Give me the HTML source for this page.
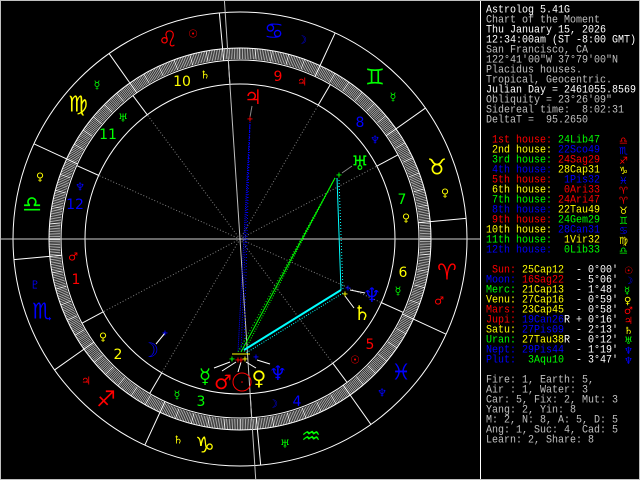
<!DOCTYPE html>
<html><head><meta charset="utf-8">
<style>
html,body{margin:0;padding:0;background:#000;}
#wrap{position:relative;width:640px;height:480px;overflow:hidden;background:#000;}
#frame{position:absolute;left:0;top:0;width:638px;height:478px;border:1px solid #c0c0c0;}
#vsep{position:absolute;left:480px;top:0;width:1px;height:480px;background:#ffffff;}
#panel{position:absolute;left:486px;top:6px;width:160px;height:480px;font-family:"Liberation Mono","DejaVu Sans Mono",monospace;font-size:10px;}
.ln{position:absolute;left:0;height:10px;line-height:10px;white-space:pre;transform:scaleY(1.12);transform-origin:0 0;}
.g{position:absolute;left:0;font-family:"DejaVu Sans",sans-serif;font-size:10px;line-height:10px;}
.w{color:#fff}.s{color:#c0c0c0}.r{color:#ff0000}.y{color:#ffff00}.gr{color:#00ff00}.b{color:#0000ff}
svg text{font-family:"DejaVu Sans",sans-serif;text-anchor:middle;dominant-baseline:central;}
</style></head><body>
<div id="wrap">
<svg id="chart" width="480" height="480" style="position:absolute;left:0;top:0">
<g id="geo"></g>
<g font-size="22">
<text x="168" y="40" fill="#f00">♌&#xFE0E;</text>
<text x="78" y="105" fill="#ff0">♍&#xFE0E;</text>
<text x="32" y="205" fill="#0f0">♎&#xFE0E;</text>
<text x="42" y="312" fill="#00f">♏&#xFE0E;</text>
<text x="106" y="400" fill="#f00">♐&#xFE0E;</text>
<text x="205" y="446" fill="#ff0">♑&#xFE0E;</text>
<text x="311" y="437" fill="#0f0">♒&#xFE0E;</text>
<text x="401" y="373" fill="#00f">♓&#xFE0E;</text>
<text x="447" y="273" fill="#f00">♈&#xFE0E;</text>
<text x="437" y="168" fill="#ff0">♉&#xFE0E;</text>
<text x="375" y="78" fill="#0f0">♊&#xFE0E;</text>
<text x="274" y="32" fill="#00f">♋&#xFE0E;</text>
</g>
<g font-size="11">
<text x="193" y="34" fill="#f00">☉</text>
<text x="302" y="40" fill="#00f">☽</text>
<text x="393" y="97" fill="#0f0">☿</text>
<text x="445" y="193" fill="#ff0">♀</text>
<text x="439" y="301" fill="#f00">♂</text>
<text x="382" y="393" fill="#00f">♆</text>
<text x="285" y="444" fill="#0f0">♅</text>
<text x="178" y="440" fill="#ff0">♄</text>
<text x="86" y="381" fill="#f00">♃</text>
<text x="35" y="285" fill="#00f">♇</text>
<text x="40" y="177" fill="#ff0">♀</text>
<text x="97" y="85" fill="#0f0">☿</text>
</g>
<g font-size="14" style="font-family:'DejaVu Sans Mono',monospace">
<text x="182" y="82" fill="#ff0">10</text>
<text x="108" y="135" fill="#0f0">11</text>
<text x="75" y="205" fill="#00f">12</text>
<text x="76" y="280" fill="#f00">1</text>
<text x="118" y="355" fill="#ff0">2</text>
<text x="201" y="402" fill="#0f0">3</text>
<text x="297" y="402" fill="#00f">4</text>
<text x="370" y="345" fill="#f00">5</text>
<text x="403" y="273" fill="#ff0">6</text>
<text x="402" y="200" fill="#0f0">7</text>
<text x="360" y="123" fill="#00f">8</text>
<text x="278" y="77" fill="#f00">9</text>
</g>
<g font-size="11">
<text x="205" y="75" fill="#ff0">♄</text>
<text x="123" y="118" fill="#0f0">♅</text>
<text x="80" y="187" fill="#00f">♆</text>
<text x="73" y="257" fill="#f00">♂</text>
<text x="103" y="337" fill="#ff0">♀</text>
<text x="177" y="395" fill="#0f0">☿</text>
<text x="273" y="404" fill="#00f">☽</text>
<text x="355" y="360" fill="#f00">☉</text>
<text x="398" y="291" fill="#0f0">☿</text>
<text x="406" y="218" fill="#ff0">♀</text>
<text x="375" y="140" fill="#00f">♆</text>
<text x="302" y="82" fill="#f00">♃</text>
</g>
<g fill="none">
<line x1="250" y1="122" x2="238" y2="352" stroke="#00f" stroke-dasharray="1 1"/>
<line x1="250" y1="122" x2="241" y2="352" stroke="#00f" stroke-dasharray="1 1.5"/>
<line x1="250" y1="122" x2="244" y2="350" stroke="#00f" stroke-dasharray="1 2"/>
<line x1="335" y1="178" x2="241" y2="352" stroke="#0f0"/>
<line x1="335" y1="178" x2="244" y2="352" stroke="#0f0" stroke-dasharray="1 1.5"/>
<line x1="335" y1="178" x2="238" y2="352" stroke="#0f0" stroke-dasharray="1 2"/>
<line x1="337" y1="178" x2="341" y2="290" stroke="#0ff"/>
<line x1="339" y1="180" x2="343" y2="290" stroke="#0ff" stroke-dasharray="1 2"/>
<line x1="341" y1="290" x2="244" y2="350" stroke="#0ff" stroke-width="2"/>
<line x1="343" y1="293" x2="246" y2="353" stroke="#0ff" stroke-dasharray="1 1.5"/>
<line x1="232" y1="354" x2="250" y2="354" stroke="#ff0"/>
<line x1="250" y1="117" x2="252" y2="106" stroke="#888"/>
<line x1="342" y1="173" x2="352" y2="166" stroke="#888"/>
<line x1="165" y1="333" x2="156" y2="344" stroke="#fff"/>
<line x1="350" y1="290" x2="365" y2="293" stroke="#fff"/>
<line x1="345" y1="296" x2="354" y2="308" stroke="#fff"/>
<line x1="236" y1="362" x2="222" y2="371" stroke="#fff"/>
<line x1="241" y1="362" x2="238" y2="372" stroke="#fff"/>
<line x1="230" y1="362" x2="214" y2="368" stroke="#fff"/>
<line x1="246" y1="362" x2="256" y2="368" stroke="#fff"/>
<line x1="257" y1="360" x2="270" y2="364" stroke="#fff"/>
</g>
<g font-size="8" font-weight="bold">
<text x="250" y="119" fill="#f00">+</text>
<text x="339" y="175" fill="#0f0">+</text>
<text x="348" y="288" fill="#00f">+</text>
<text x="345" y="294" fill="#ff0">+</text>
<text x="165" y="333" fill="#00f">+</text>
<text x="232" y="359" fill="#0f0">+</text>
<text x="238" y="360" fill="#f00">+</text>
<text x="241" y="360" fill="#f00">+</text>
<text x="245" y="359" fill="#ff0">+</text>
<text x="256" y="357" fill="#00f">+</text>
</g>
<g font-size="20">
<text x="253" y="97" fill="#f00">♃</text>
<text x="360" y="163" fill="#0f0">♅</text>
<text x="372" y="295" fill="#00f">♆</text>
<text x="362" y="313" fill="#ff0">♄</text>
<text x="150" y="350" fill="#00f">☽</text>
<text x="205" y="376" fill="#0f0">☿</text>
<text x="223" y="382" fill="#f00">♂</text>
<text x="259" y="378" fill="#ff0">♀</text>
<text x="278" y="373" fill="#00f">♆</text>
</g>
<circle cx="242" cy="382" r="9" fill="none" stroke="#f00"/>
<circle cx="242" cy="382" r="0.8" fill="#f00"/>
</svg>
<div id="vsep"></div>
<div id="frame"></div>
<div id="panel">
<div class="ln w" style="top:0px">Astrolog 5.41G</div>
<div class="ln s" style="top:10px">Chart of the Moment</div>
<div class="ln w" style="top:20px">Thu January 15, 2026</div>
<div class="ln w" style="top:30px">12:34:00am (ST -8:00 GMT)</div>
<div class="ln s" style="top:40px">San Francisco, CA</div>
<div class="ln s" style="top:50px">122°41'00"W 37°79'00"N</div>
<div class="ln s" style="top:60px">Placidus houses.</div>
<div class="ln s" style="top:70px">Tropical, Geocentric.</div>
<div class="ln w" style="top:80px">Julian Day = 2461055.8569</div>
<div class="ln s" style="top:90px">Obliquity = 23°26'09"</div>
<div class="ln s" style="top:100px">Sidereal time:  8:02:31</div>
<div class="ln s" style="top:110px">DeltaT =  95.2650</div>

<div class="ln" style="top:130px"><span class="r"> 1st house:</span> <span class="gr">24Lib47</span></div>
<div class="ln" style="top:140px"><span class="y"> 2nd house:</span> <span class="b">22Sco49</span></div>
<div class="ln" style="top:150px"><span class="gr"> 3rd house:</span> <span class="r">24Sag29</span></div>
<div class="ln" style="top:160px"><span class="b"> 4th house:</span> <span class="y">28Cap31</span></div>
<div class="ln" style="top:170px"><span class="r"> 5th house:</span> <span class="b"> 1Pis32</span></div>
<div class="ln" style="top:180px"><span class="y"> 6th house:</span> <span class="r"> 0Ari33</span></div>
<div class="ln" style="top:190px"><span class="gr"> 7th house:</span> <span class="r">24Ari47</span></div>
<div class="ln" style="top:200px"><span class="b"> 8th house:</span> <span class="y">22Tau49</span></div>
<div class="ln" style="top:210px"><span class="r"> 9th house:</span> <span class="gr">24Gem29</span></div>
<div class="ln" style="top:220px"><span class="y">10th house:</span> <span class="b">28Can31</span></div>
<div class="ln" style="top:230px"><span class="gr">11th house:</span> <span class="y"> 1Vir32</span></div>
<div class="ln" style="top:240px"><span class="b">12th house:</span> <span class="gr"> 0Lib33</span></div>

<div class="ln" style="top:260px"><span class="r"> Sun:</span> <span class="y">25Cap12</span><span class="w">  - 0°00'</span></div>
<div class="ln" style="top:270px"><span class="b">Moon:</span> <span class="r">16Sag22</span><span class="w">  - 5°06'</span></div>
<div class="ln" style="top:280px"><span class="gr">Merc:</span> <span class="y">21Cap13</span><span class="w">  - 1°48'</span></div>
<div class="ln" style="top:290px"><span class="y">Venu:</span> <span class="y">27Cap16</span><span class="w">  - 0°59'</span></div>
<div class="ln" style="top:300px"><span class="r">Mars:</span> <span class="y">23Cap45</span><span class="w">  - 0°58'</span></div>
<div class="ln" style="top:310px"><span class="r">Jupi:</span> <span class="b">19Can26</span><span class="w">R + 0°16'</span></div>
<div class="ln" style="top:320px"><span class="y">Satu:</span> <span class="b">27Pis09</span><span class="w">  - 2°13'</span></div>
<div class="ln" style="top:330px"><span class="gr">Uran:</span> <span class="y">27Tau38</span><span class="w">R - 0°12'</span></div>
<div class="ln" style="top:340px"><span class="b">Nept:</span> <span class="b">29Pis44</span><span class="w">  - 1°19'</span></div>
<div class="ln" style="top:350px"><span class="b">Plut:</span> <span class="gr"> 3Aqu10</span><span class="w">  - 3°47'</span></div>

<div class="ln s" style="top:370px">Fire: 1, Earth: 5,</div>
<div class="ln s" style="top:380px">Air : 1, Water: 3</div>
<div class="ln s" style="top:390px">Car: 5, Fix: 2, Mut: 3</div>
<div class="ln s" style="top:400px">Yang: 2, Yin: 8</div>
<div class="ln s" style="top:410px">M: 2, N: 8, A: 5, D: 5</div>
<div class="ln s" style="top:420px">Ang: 1, Suc: 4, Cad: 5</div>
<div class="ln s" style="top:430px">Learn: 2, Share: 8</div>

<div class="g r" style="left:133px;top:131px">♎</div>
<div class="g b" style="left:133px;top:141px">♏</div>
<div class="g r" style="left:133px;top:151px">♐</div>
<div class="g y" style="left:133px;top:161px">♑</div>
<div class="g b" style="left:133px;top:171px">♓</div>
<div class="g r" style="left:133px;top:181px">♈</div>
<div class="g r" style="left:133px;top:191px">♈</div>
<div class="g y" style="left:133px;top:201px">♉</div>
<div class="g gr" style="left:133px;top:211px">♊</div>
<div class="g b" style="left:133px;top:221px">♋</div>
<div class="g y" style="left:133px;top:231px">♍</div>
<div class="g gr" style="left:133px;top:241px">♎</div>

<div class="g r" style="left:138px;top:261px">☉</div>
<div class="g b" style="left:138px;top:271px">☽</div>
<div class="g gr" style="left:138px;top:281px">☿</div>
<div class="g y" style="left:138px;top:291px">♀</div>
<div class="g r" style="left:138px;top:301px">♂</div>
<div class="g r" style="left:138px;top:311px">♃</div>
<div class="g y" style="left:138px;top:321px">♄</div>
<div class="g gr" style="left:138px;top:331px">♅</div>
<div class="g b" style="left:138px;top:341px">♆</div>
<div class="g b" style="left:138px;top:351px">♆</div>
</div>
</div>
<script>
(function(){
var g=document.getElementById('geo'),NS='http://www.w3.org/2000/svg',cx=240,cy=239,asc=204.78;
function P(r,L){var a=(180+L-asc)*Math.PI/180;return [cx+r*Math.cos(a),cy-r*Math.sin(a)];}
function line(a,b,c,w,d){var l=document.createElementNS(NS,'line');l.setAttribute('x1',a[0]);l.setAttribute('y1',a[1]);l.setAttribute('x2',b[0]);l.setAttribute('y2',b[1]);l.setAttribute('stroke',c);l.setAttribute('stroke-width',w||1);if(d)l.setAttribute('stroke-dasharray',d);g.appendChild(l);}
function circ(r){var c=document.createElementNS(NS,'circle');c.setAttribute('cx',cx);c.setAttribute('cy',cy);c.setAttribute('r',r);c.setAttribute('fill','none');c.setAttribute('stroke','#fff');g.appendChild(c);}
for(var d=0;d<360;d+=0.5){line(P(180,d),P(191,d),(d%5==0)?'#f0f0f0':'#a8a8a8',1);}
[227,191,179,155].forEach(circ);
for(var k=0;k<12;k++){line(P(179,30*k),P(227,30*k),'#fff');}
var cusps=[204.78,232.82,264.48,298.52,331.53,0.55,24.78,52.82,84.48,118.52,151.53,180.55];
cusps.forEach(function(c,i){line(P(155,c),P(179,c),'#fff');if(i%3!=0)line(P(0,c),P(155,c),'#808080',1,'1 2');});
line([0,239],[480,239],'#d0d0d0');
line(P(260,118.52),P(260,298.52),'#c0c0c0');
})();
</script>
</body></html>
